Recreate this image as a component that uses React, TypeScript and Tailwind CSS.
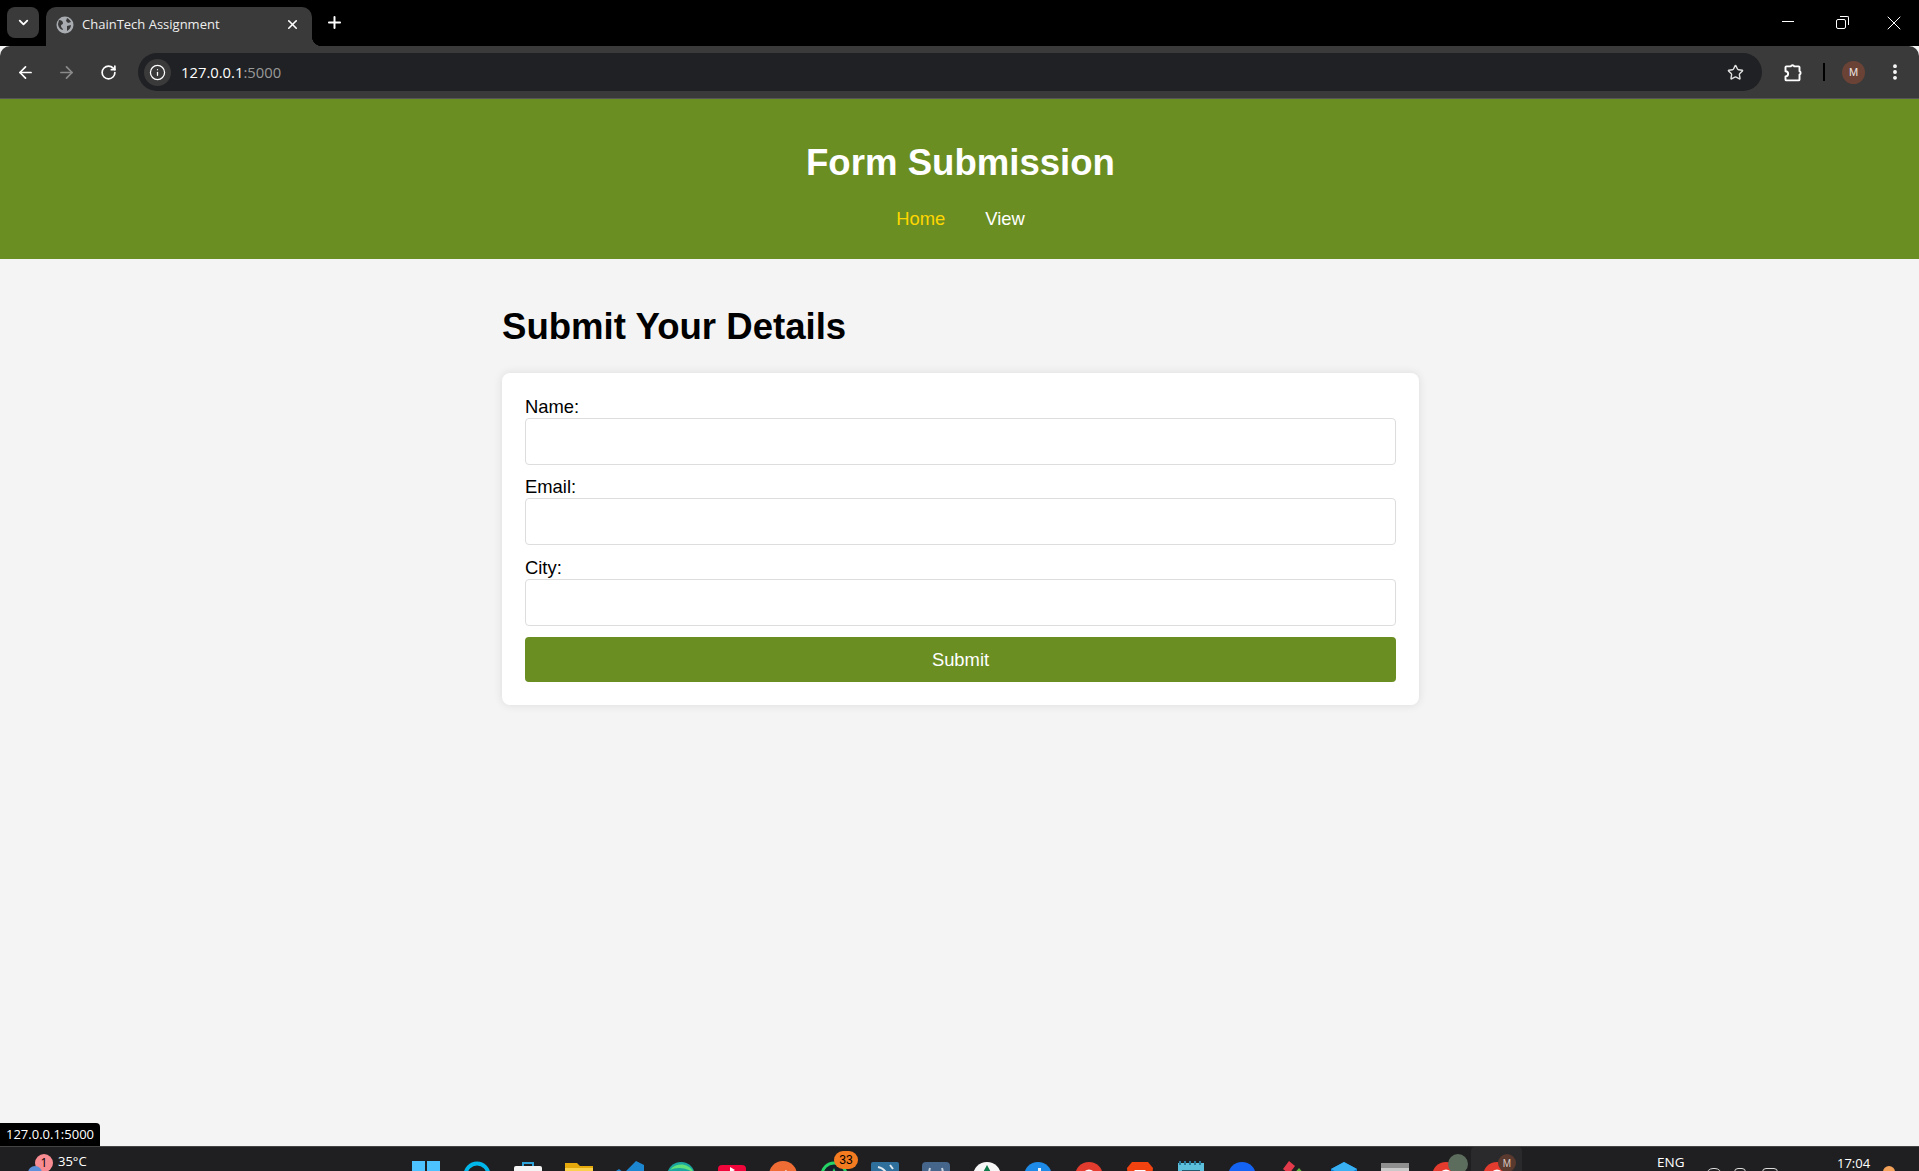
import { ArrowLeft, ArrowRight, ChevronDown, Info, MoreVertical, Plus, RotateCw, Star, X } from 'lucide-react';

const chromeIcon = (
  <svg width="30" height="30" viewBox="0 0 30 30">
    <circle cx="15" cy="15" r="14" fill="#e33b2e" />
    <path d="M15 15 L3 22 A14 14 0 0 0 15 29 Z" fill="#2fa44f" />
    <path d="M15 15 L27 22 A14 14 0 0 1 15 29 Z" fill="#f8c51c" />
    <circle cx="15" cy="15" r="6.5" fill="#fff" />
    <circle cx="15" cy="15" r="5" fill="#2a7de1" />
  </svg>
);

const taskbarIcons = [
  <svg key="win" width="28" height="28" viewBox="0 0 28 28"><rect width="13" height="13" fill="#4cc2ff" /><rect x="15" width="13" height="13" fill="#4cc2ff" /></svg>,
  <svg key="search" width="28" height="28" viewBox="0 0 28 28"><circle cx="14" cy="14" r="11.5" fill="none" stroke="#00b7eb" strokeWidth="4" /></svg>,
  <svg key="store" width="28" height="28" viewBox="0 0 28 28"><path d="M9 5V2h10v3" fill="none" stroke="#2ea3d8" strokeWidth="2" /><rect y="5" width="28" height="23" rx="2" fill="#f4f4f4" /></svg>,
  <svg key="files" width="28" height="28" viewBox="0 0 28 28"><path d="M0 2h12l3 3h13v23H0z" fill="#e6a90c" /><rect y="7" width="28" height="21" fill="#fbd04b" /></svg>,
  <svg key="code" width="28" height="28" viewBox="0 0 28 28"><path d="M20 0l8 4v20l-8 4L8 16l-5 4-3-2 6-4-6-4 3-2 5 4z" fill="#1c86d1" /></svg>,
  <svg key="edge" width="30" height="30" viewBox="0 0 30 30"><circle cx="15" cy="15" r="14" fill="#1aa5a0" /><path d="M4 9a14 14 0 0 1 24 3c-8-6-18-6-24-3z" fill="#5ee07b" /></svg>,
  <svg key="red" width="28" height="28" viewBox="0 0 28 28"><rect y="4" width="28" height="24" rx="4" fill="#f0063b" /><path d="M12 6l5 3-5 3z" fill="#fff" /></svg>,
  <svg key="postman" width="28" height="28" viewBox="0 0 28 28"><circle cx="14" cy="14" r="14" fill="#ef6c35" /><path d="M10 19l8-9" stroke="#fff" strokeWidth="3" /></svg>,
  <svg key="whatsapp" width="28" height="28" viewBox="0 0 28 28"><circle cx="14" cy="14" r="12" fill="#16202a" stroke="#25d366" strokeWidth="3" /><path d="M14 7l4 9h-8z" fill="#25d366" /></svg>,
  <svg key="mysql" width="30" height="30" viewBox="0 0 30 30"><rect x="1" y="1" width="28" height="28" rx="2" fill="#2f6f9c" /><path d="M8 6c5 1 8 4 10 9M20 4l3 4" stroke="#dfe8ee" strokeWidth="2" fill="none" /></svg>,
  <svg key="pg" width="30" height="30" viewBox="0 0 30 30"><rect x="1" y="1" width="28" height="28" rx="4" fill="#45658a" /><path d="M9 7c-2 6 0 10 3 12M21 7c2 6 0 10-3 12" stroke="#c8d4e0" strokeWidth="2" fill="none" /></svg>,
  <svg key="tree" width="30" height="30" viewBox="0 0 30 30"><circle cx="15" cy="15" r="14" fill="#f7f7f7" /><path d="M15 4l6 11H9z" fill="#0f7a4a" /></svg>,
  <svg key="blue" width="30" height="30" viewBox="0 0 30 30"><circle cx="15" cy="15" r="14" fill="#1c8ae6" /><path d="M11 12h4V7h3v9h-7z" fill="#e9f3fc" /></svg>,
  <span key="chrome">{chromeIcon}</span>,
  <svg key="brave" width="28" height="28" viewBox="0 0 28 28"><path d="M6 1h16l5 6-2 21H3L1 7z" fill="#f1420f" /><path d="M8 9h12l-4 4v6h-4v-6z" fill="#fff" /></svg>,
  <svg key="notes" width="26" height="28" viewBox="0 0 26 28"><rect y="2" width="26" height="26" fill="#5cc0dd" /><path d="M2 0v4M7 0v4M12 0v4M17 0v4M22 0v4" stroke="#2a7c9c" strokeWidth="2" /><rect x="4" y="9" width="18" height="2" fill="#23596e" /></svg>,
  <svg key="bluecircle" width="30" height="30" viewBox="0 0 30 30"><circle cx="15" cy="15" r="14" fill="#1463f3" /></svg>,
  <svg key="pen" width="28" height="28" viewBox="0 0 28 28"><path d="M10 0l6 5-6 8-6-5z" fill="#e23a4a" /><path d="M20 7l7 8-8 9-7-8z" fill="#63b83e" /><path d="M4 12l8 7-6 8-6-6z" fill="#f1b82d" /></svg>,
  <svg key="box" width="30" height="30" viewBox="0 0 30 30"><path d="M15 1l13 7v14l-13 7-13-7V8z" fill="#0b7fd6" /><path d="M15 1l13 7-13 7L2 8z" fill="#38b0f2" /></svg>,
  <svg key="win2" width="28" height="28" viewBox="0 0 28 28"><rect y="2" width="28" height="26" rx="1" fill="#c9c9c9" /><rect y="2" width="28" height="5" fill="#8f8f8f" /><rect x="3" y="10" width="22" height="18" fill="#3a3a3a" /></svg>,
];

export default function App() {
  return (
    <div className="relative flex h-[1171px] flex-col overflow-hidden bg-[#f4f4f4] font-['Liberation_Sans',sans-serif] text-black">
      {/* tab strip */}
      <div className="flex h-[46px] items-start bg-black pl-[7px] pt-[7px] text-white">
        <div className="flex h-[31px] w-[32px] items-center justify-center rounded-lg bg-[#3a3a3a]">
          <ChevronDown size={15} strokeWidth={3} />
        </div>
        <div className="relative ml-[7px] flex h-[39px] w-[266px] items-center rounded-t-[10px] bg-[#3a3a3a] pb-[4px] pl-[10px] pr-[12px]">
          <svg width="18" height="18" viewBox="0 0 18 18" className="shrink-0">
            <circle cx="9" cy="9" r="8.5" fill="#a9adb2" />
            <path d="M3 4c2 0 4 1 4 3s-2 1-2 3 2 2 2 4c-2 0-5-3-5-6zM11 2c2 1 3 2 4 4l-3 1-2-2zM11 10l4-1c0 3-2 5-4 6z" fill="#3a3a3a" />
          </svg>
          <span className="ml-[8px] flex-1 font-['Open_Sans',sans-serif] text-[13px] text-[#eeeeee]">ChainTech Assignment</span>
          <X size={15} strokeWidth={2.5} />
          <span className="absolute bottom-0 right-[-10px] h-[10px] w-[10px] bg-[radial-gradient(circle_at_100%_0,transparent_10px,#3a3a3a_10.5px)]" />
        </div>
        <Plus size={19} strokeWidth={2.5} className="ml-[13px] mt-[6px]" />
        <div className="flex-1" />
        <div className="mr-[-1px] flex items-start">
          <div className="flex h-[31px] w-[53px] items-center justify-center pb-[2px]"><div className="h-px w-[12px] bg-white" /></div>
          <div className="flex h-[31px] w-[53px] items-center justify-center pt-[2px]">
            <div className="relative h-[10px] w-[10px] rounded-[2px] border border-white">
              <span className="absolute right-[-4px] top-[-4px] h-[9px] w-[9px] rounded-tr-[2px] border-r border-t border-white" />
            </div>
          </div>
          <div className="flex h-[31px] w-[53px] items-center justify-center pt-[1px]"><X size={24} strokeWidth={1} /></div>
        </div>
      </div>
      {/* toolbar */}
      <div className="flex h-[53px] items-center rounded-t-[10px] border-b border-[#555] bg-[#3a3a3a] text-white">
        <div className="flex w-[133px] shrink-0 items-center">
          <ArrowLeft size={19} strokeWidth={2.2} className="ml-[16px]" />
          <ArrowRight size={19} strokeWidth={2.2} className="ml-[22px] text-[#8a8a8a]" />
          <RotateCw size={17} strokeWidth={2.4} className="ml-[24px]" />
        </div>
        <div className="ml-[5px] flex h-[38px] w-[1624px] items-center rounded-full bg-[#202124] pl-[6px] pr-[18px]">
          <div className="flex h-[27px] w-[27px] items-center justify-center rounded-full bg-[#3a3a3a]">
            <Info size={17} strokeWidth={1.8} />
          </div>
          <span className="ml-[10px] flex-1 font-['Open_Sans',sans-serif] text-[14.8px]">
            127.0.0.1<span className="text-[#9a9a9a]">:5000</span>
          </span>
          <Star size={17} strokeWidth={2} className="text-[#e0e0e0]" />
        </div>
        <svg width="21" height="21" viewBox="0 0 24 24" fill="none" stroke="currentColor" strokeWidth="2.2" strokeLinejoin="round" className="ml-[20px]">
          <path d="M5 5h5a2.2 2.2 0 0 1 4 0h5a1 1 0 0 1 1 1v4.5a2.2 2.2 0 0 1 0 4V20a1 1 0 0 1-1 1H5a1 1 0 0 1-1-1v-3.5a3 3 0 0 0 0-6V6a1 1 0 0 1 1-1z" />
        </svg>
        <div className="ml-[20px] h-[18px] w-[2px] bg-black" />
        <div className="ml-[17px] flex h-[23px] w-[23px] items-center justify-center rounded-full bg-[#6a4336] text-[11px] text-[#f0e6e2]">M</div>
        <MoreVertical size={20} strokeWidth={2.6} className="ml-[20px]" />
      </div>

      <header className="flex h-[160px] flex-col items-center bg-[#6b8e23] pl-[2px] text-white">
        <h1 className="mt-[42px] text-[36.6px] font-bold leading-[44px]">Form Submission</h1>
        <nav className="mt-[24px] flex gap-[40px] text-[18.4px] leading-[20px]">
          <a className="text-[#ffd700]">Home</a>
          <a>View</a>
        </nav>
      </header>

      <main className="flex flex-1 flex-col items-center pl-[2px]">
        <div className="w-[917px]">
          <h2 className="mt-[46px] text-[36.6px] font-bold leading-[44px]">Submit Your Details</h2>
          <form className="mt-[24px] flex flex-col rounded-lg bg-white p-[23px] shadow-[0_0_10px_rgba(0,0,0,0.1)]">
            <Field label="Name:" className="mb-[11px]" />
            <Field label="Email:" className="mb-[12px]" />
            <Field label="City:" className="mb-[11px]" />
            <button type="button" className="h-[45px] rounded bg-[#6b8e23] text-[18.4px] text-white">Submit</button>
          </form>
        </div>
      </main>

      <div className="absolute bottom-[25px] left-0 flex h-[23px] w-[100px] items-center justify-center rounded-tr bg-black font-['Open_Sans',sans-serif] text-[13px] text-white">127.0.0.1:5000</div>

      {/* taskbar */}
      <div className="flex h-[25px] shrink-0 overflow-hidden border-t border-[#444] bg-[#1f1f21] text-white">
        <div className="relative w-[400px] shrink-0 font-['Open_Sans',sans-serif] text-[13px]">
          <span className="absolute left-[58px] top-[5px] leading-[18px]">35°C</span>
          <span className="absolute left-[35px] top-[7px] flex h-[18px] w-[18px] items-center justify-center rounded-full bg-[#f78c92] text-[12px] text-black">1</span>
          <span className="absolute left-[28px] top-[19px] h-[10px] w-[14px] rounded-t-full bg-[#5b8fd9]" />
        </div>
        <div className="flex">
          {taskbarIcons.map((icon, i) => (
            <div key={i} className="relative flex h-[40px] w-[51px] justify-center pt-[14px]">
              {icon}
              {i === 8 && (
                <span className="absolute left-[26px] top-[4px] flex h-[18px] w-[24px] items-center justify-center rounded-full bg-[#f47b20] text-[12px] text-black">33</span>
              )}
            </div>
          ))}
          <div className="relative flex h-[40px] w-[51px] justify-center pt-[14px]">
            {chromeIcon}
            <span className="absolute right-[3px] top-[7px] h-[20px] w-[20px] rounded-full bg-[#5c6d5e]" />
          </div>
          <div className="relative flex h-[40px] w-[51px] justify-center rounded bg-[#2a2a2c] pt-[14px]">
            {chromeIcon}
            <span className="absolute right-[6px] top-[7px] flex h-[18px] w-[18px] items-center justify-center rounded-full bg-[#5a392e] text-[10px] text-[#d8c8c2]">M</span>
          </div>
        </div>
        <div className="relative flex-1 font-['Open_Sans',sans-serif] text-[13.5px]">
          <span className="absolute left-[135px] top-[9px] leading-none">ENG</span>
          <span className="absolute left-[184px] top-[21px] h-[14px] w-[16px] rounded-full border border-[#ddd]" />
          <span className="absolute left-[212px] top-[21px] h-[12px] w-[12px] rounded-sm border border-[#ddd]" />
          <span className="absolute left-[240px] top-[21px] h-[12px] w-[16px] rounded-sm border border-[#ddd]" />
          <span className="absolute left-[315px] top-[10px] text-[13px] leading-none">17:04</span>
          <span className="absolute left-[361px] top-[19px] h-[12px] w-[12px] rounded-full bg-[#f4a259]" />
        </div>
      </div>
    </div>
  );
}

function Field({ label, className }: { label: string; className: string }) {
  return (
    <div className={`flex flex-col ${className}`}>
      <label className="text-[18.4px] leading-[22px]">{label}</label>
      <input type="text" className="h-[47px] rounded border border-[#ddd] bg-white outline-none" />
    </div>
  );
}
